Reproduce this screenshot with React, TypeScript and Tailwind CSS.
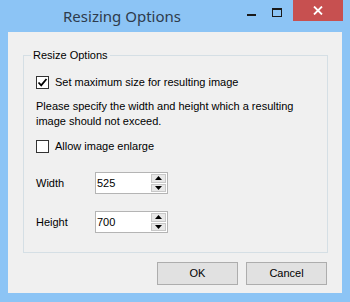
import React from "react";

function CheckBox({ checked }: { checked: boolean }) {
    return (
        <div className="w-[13px] h-[13px] border border-[#333333] bg-white flex items-center justify-center shrink-0">
            {checked && (
                <svg width="11" height="11" viewBox="0 0 11 11">
                    <path d="M1.5 5.5 L4.2 8.3 L9.5 2" fill="none" stroke="#000" strokeWidth="1.8" />
                </svg>
            )}
        </div>
    );
}

function SpinBox({ value }: { value: string }) {
    return (
        <div className="w-[73px] h-[22px] border border-[#b4b4b4] bg-white flex items-center">
            <span className="flex-1 pl-[1px] text-[11px] text-black">{value}</span>
            <div className="w-[16px] h-full flex flex-col gap-[1px] py-[1px] pr-[1px]">
                <div className="flex-1 bg-[#e8e8e8] border border-[#c8c8c8] flex items-center justify-center">
                    <svg width="7" height="4" viewBox="0 0 7 4">
                        <path d="M3.5 0 L7 4 L0 4 Z" fill="#000" />
                    </svg>
                </div>
                <div className="flex-1 bg-[#e8e8e8] border border-[#c8c8c8] flex items-center justify-center">
                    <svg width="7" height="4" viewBox="0 0 7 4">
                        <path d="M0 0 L7 0 L3.5 4 Z" fill="#000" />
                    </svg>
                </div>
            </div>
        </div>
    );
}

function DialogButton({ label }: { label: string }) {
    return (
        <button className="w-[81px] h-[23px] bg-[#e1e1e1] border border-[#adadad] text-[11px] text-black">
            {label}
        </button>
    );
}

export default function App() {
    return (
        <div
            className="w-[350px] h-[302px] bg-[#8cc4f5] flex flex-col"
            style={{ fontFamily: '"Liberation Sans", Arial, sans-serif' }}
        >
            {/* title bar */}
            <div className="h-[32px] flex items-start shrink-0">
                <div
                    className="flex-1 h-[32px] flex items-center justify-center pl-[6px] text-[15px] text-[#2e3b4c]"
                    style={{ fontFamily: '"Noto Sans", "Open Sans", sans-serif' }}
                >
                    Resizing Options
                </div>
                <div className="w-[26px] h-[21px] flex items-center justify-center">
                    <div className="w-[9px] h-[2px] bg-[#1a1a1a] mt-[9px]" />
                </div>
                <div className="w-[26px] h-[21px] flex items-center justify-center">
                    <div className="w-[10px] h-[9px] border border-t-2 border-[#1a1a1a] mt-[4px]" />
                </div>
                <div className="w-[50px] h-[21px] bg-[#c75050] flex items-center justify-center mr-[7px] ml-[3px]">
                    <svg width="10" height="9" viewBox="0 0 10 9">
                        <path d="M1 0.5 L9 8.5 M9 0.5 L1 8.5" stroke="#fff" strokeWidth="1.8" />
                    </svg>
                </div>
            </div>

            {/* client area */}
            <div className="mx-[8px] mb-[9px] flex-1 bg-[#f0f0f0] flex flex-col text-[11px] text-black">
                <div className="relative mt-[23px] ml-[15px] w-[305px] h-[198px] border border-[#d5dfe5] pl-[12px] pt-[19px]">
                    <span className="absolute -top-[8px] left-[7px] px-[2px] bg-[#f0f0f0] leading-[14px]">
                        Resize Options
                    </span>
                    <div className="flex items-center gap-[6px] h-[14px]">
                        <CheckBox checked />
                        <span>Set maximum size for resulting image</span>
                    </div>
                    <p className="mt-[10px] leading-[15px]">
                        Please specify the width and height which a resulting
                        <br />
                        image should not exceed.
                    </p>
                    <div className="mt-[10px] flex items-center gap-[6px] h-[14px]">
                        <CheckBox checked={false} />
                        <span>Allow image enlarge</span>
                    </div>
                    <div className="mt-[19px] flex items-center h-[22px]">
                        <span className="w-[59px]">Width</span>
                        <SpinBox value="525" />
                    </div>
                    <div className="mt-[17px] flex items-center h-[22px]">
                        <span className="w-[59px]">Height</span>
                        <SpinBox value="700" />
                    </div>
                </div>
                <div className="mt-[9px] mr-[15px] flex justify-end gap-[8px]">
                    <DialogButton label="OK" />
                    <DialogButton label="Cancel" />
                </div>
            </div>
        </div>
    );
}
